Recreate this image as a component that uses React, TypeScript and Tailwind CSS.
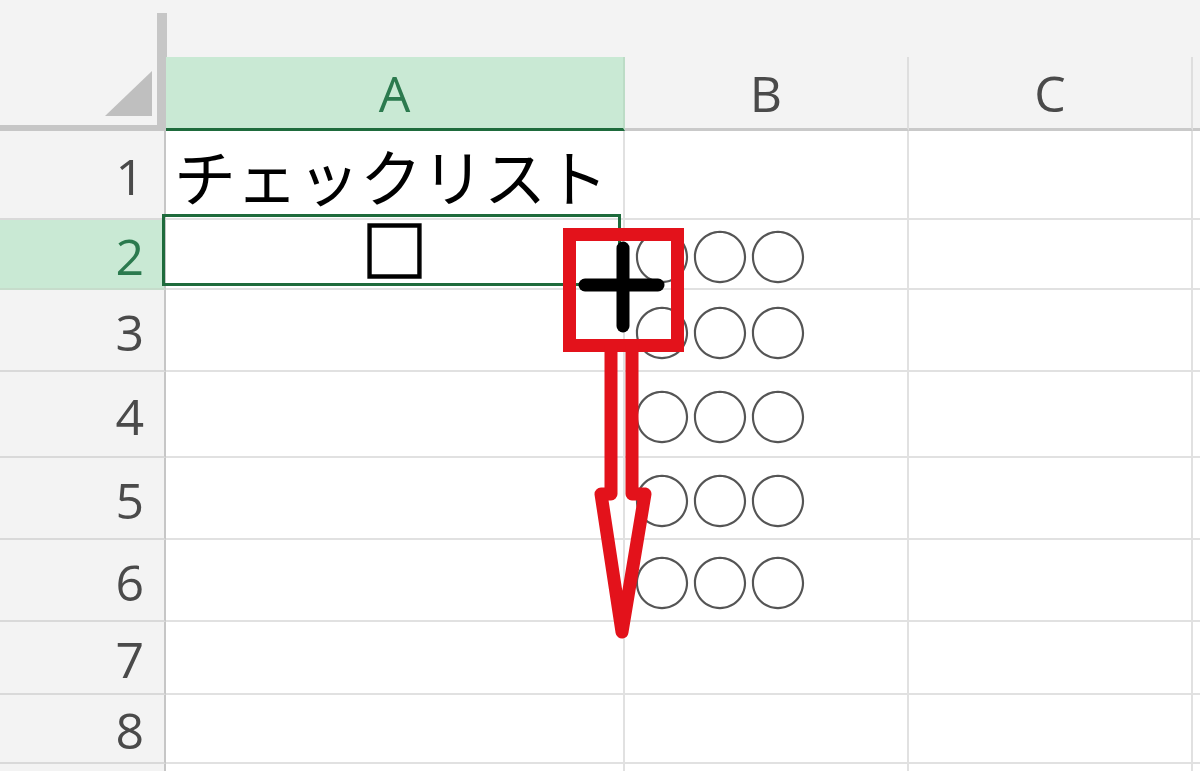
const jp = "font-['Noto_Sans_CJK_JP','Noto_Sans_CJK_SC',sans-serif]";
const ui = "font-['Open_Sans','Liberation_Sans',sans-serif]";

interface RowSpec {
  n?: number;
  h: string;
  a?: string;
  b?: string;
}

const rows: RowSpec[] = [
  { n: 1, h: "h-[89px]", a: "チェックリスト" },
  { n: 2, h: "h-[70px]", a: "□", b: "○○○" },
  { n: 3, h: "h-[82px]", b: "○○○" },
  { n: 4, h: "h-[86px]", b: "○○○" },
  { n: 5, h: "h-[82px]", b: "○○○" },
  { n: 6, h: "h-[82px]", b: "○○○" },
  { n: 7, h: "h-[73px]" },
  { n: 8, h: "h-[69px]" },
  { h: "h-[40px]" },
];

function HeaderCell(props: { label: string; active?: boolean; width: string }) {
  return (
    <div
      className={`${props.width} h-[74px] flex items-center justify-center border-r-2 ${
        props.active
          ? "bg-[#c9e9d4] border-b-[3px] border-b-[#1e6b3c] border-r-[#bcdcc6] text-[#2b7a4e]"
          : "bg-[#f3f3f3] border-b-[3px] border-b-[#c9c9c9] border-r-[#dedede] text-[#4a4a4a]"
      } ${ui} text-[50px] leading-none`}
    >
      {props.label}
    </div>
  );
}

function Row(props: { row: RowSpec }) {
  const { row } = props;
  const selected = row.n === 2;
  return (
    <div className={`flex ${row.h}`}>
      <div
        className={`w-[166px] shrink-0 flex items-center justify-end pr-[20px] pt-[3px] border-r-2 border-r-[#c6c6c6] border-b-2 ${
          selected
            ? "bg-[#c9e9d4] text-[#2b7a4e] border-b-[#c6dccb]"
            : "bg-[#f3f3f3] text-[#4a4a4a] border-b-[#d9d9d9]"
        } ${ui} text-[50px] leading-none`}
      >
        {row.n}
      </div>
      <div
        className={`relative w-[459px] shrink-0 flex items-center border-r-2 border-b-2 border-[#e1e1e1] bg-white text-black ${jp} ${
          selected
            ? "justify-center pb-[14px] text-[66px] font-bold leading-none [-webkit-text-stroke:1.5px_#000]"
            : "pl-[8px] text-[62px] leading-none"
        }`}
      >
        {row.a}
        {selected && (
          <div className="absolute -left-[4px] -top-[6px] right-[2px] bottom-[2px] border-[3px] border-[#1e6b3c]" />
        )}
      </div>
      <div
        className={`w-[284px] shrink-0 flex items-center pl-[8px] border-r-2 border-b-2 border-[#e1e1e1] bg-white text-[#555] ${jp} text-[58px] leading-none`}
      >
        {row.b}
      </div>
      <div className="w-[284px] shrink-0 border-r-2 border-b-2 border-[#e1e1e1] bg-white" />
      <div className="flex-1 border-b-2 border-[#e1e1e1] bg-white" />
    </div>
  );
}

function Annotation() {
  return (
    <svg
      className="absolute inset-0 pointer-events-none"
      width="1200"
      height="771"
      viewBox="0 0 1200 771"
    >
      {/* fill handle cursor */}
      <g stroke="#000" strokeWidth="13" strokeLinecap="round">
        <line x1="623" y1="248" x2="623" y2="326" />
        <line x1="585" y1="285" x2="658" y2="285" />
      </g>
      <rect
        x="569.5"
        y="234.5"
        width="108"
        height="111"
        fill="none"
        stroke="#e3121b"
        strokeWidth="13"
      />
      <path
        d="M611 345 L611 494 L601 494 L622 632 L645 494 L632 494 L632 345"
        fill="none"
        stroke="#e3121b"
        strokeWidth="13"
        strokeLinejoin="round"
      />
    </svg>
  );
}

export default function App() {
  return (
    <div className="relative w-[1200px] h-[771px] overflow-hidden bg-white">
      <div className="flex bg-[#f3f3f3]">
        <div className="w-[166px] h-[131px] shrink-0 pt-[13px]">
          <div className="h-[118px] w-[167px] border-r-[10px] border-b-[6px] border-[#c6c6c6] flex items-end justify-end pr-[5px] pb-[9px]">
            <svg width="47" height="45" viewBox="0 0 47 45">
              <polygon points="0,45 47,45 47,0" fill="#bfbfbf" />
            </svg>
          </div>
        </div>
        <div className="flex-1 pt-[57px]">
          <div className="flex">
            <HeaderCell label="A" active width="w-[459px]" />
            <HeaderCell label="B" width="w-[284px]" />
            <HeaderCell label="C" width="w-[284px]" />
            <div className="flex-1 h-[74px] bg-[#f3f3f3] border-b-[3px] border-b-[#c9c9c9]" />
          </div>
        </div>
      </div>
      {rows.map((r, i) => (
        <Row key={i} row={r} />
      ))}
      <Annotation />
    </div>
  );
}
